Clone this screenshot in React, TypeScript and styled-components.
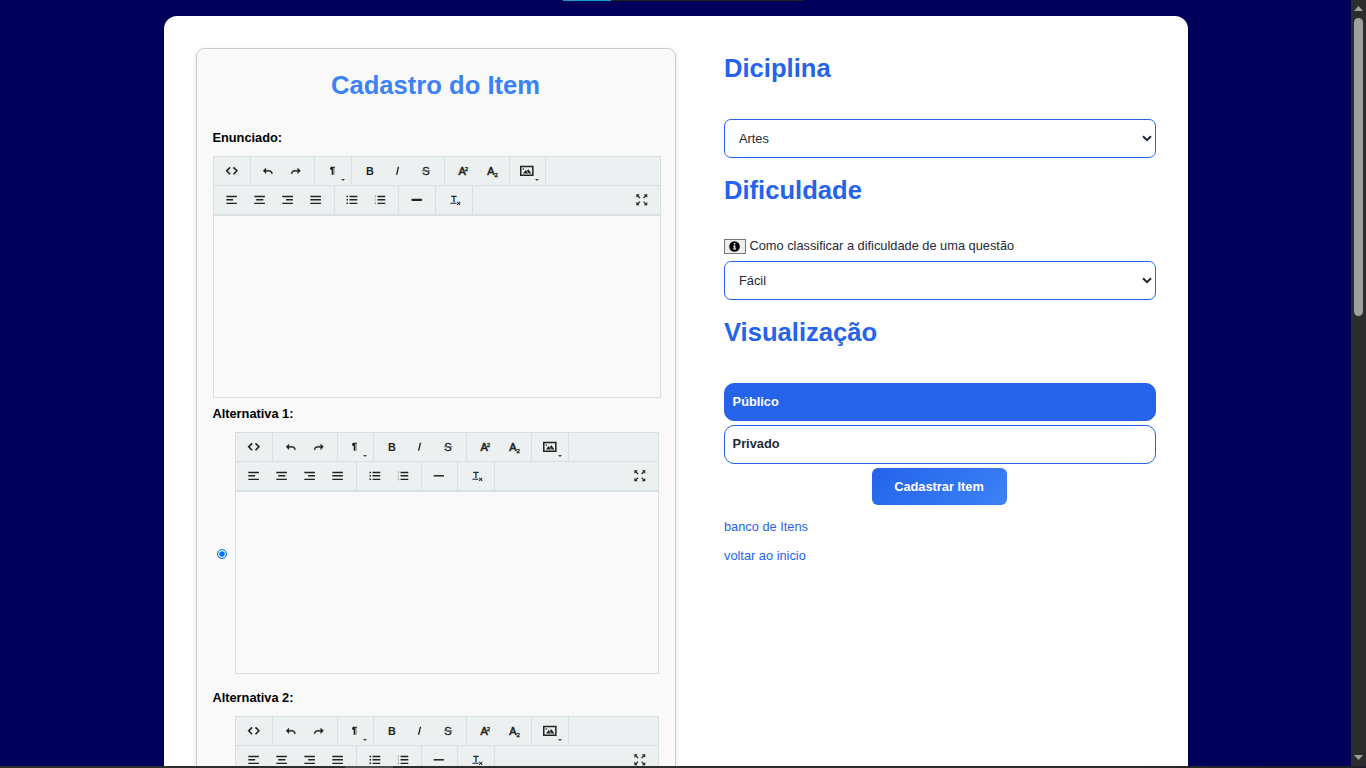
import React from 'react';
import styled, { createGlobalStyle } from 'styled-components';

const GlobalStyle = createGlobalStyle`
  * { box-sizing: border-box; }
  html, body { margin: 0; padding: 0; overflow: hidden; }
  body {
    background: #00005b;
    font-family: "Liberation Sans", Arial, sans-serif;
    font-size: 12.8px;
    color: #1f2937;
  }
`;

const Screen = styled.div`
  display: flex;
  flex-direction: column;
  width: 1366px;
  height: 768px;
  overflow: hidden;
  position: relative;
`;

const Viewport = styled.div`
  display: flex;
  height: 766px;
  overflow: hidden;
`;

const Page = styled.main`
  width: 1351px;
  padding: 16px 163px 0 164px;
  background: #00005b;
`;

const Container = styled.div`
  display: flex;
  gap: 48px;
  height: 900px;
  padding: 32px;
  background: #fff;
  border-radius: 13px;
`;

const ItemPanel = styled.section`
  width: 480px;
  padding: 15px 14px 0 16px;
  background: #f9f9f9;
  border: 1px solid #ccc;
  border-radius: 8px;
  box-shadow: 0 3px 6px rgba(0, 0, 0, 0.1);
`;

const Title = styled.h1`
  margin: 0 3px 32px 0;
  font-size: 25.6px;
  line-height: 42px;
  text-align: center;
  color: #3b82f6;
`;

const FieldLabel = styled.label<{ $top?: number }>`
  display: block;
  height: 18px;
  margin: ${(p) => p.$top ?? 0}px 0 9px -0.6px;
  font-weight: bold;
  line-height: 18px;
  color: #000;
`;

const OptionRow = styled.div`
  display: flex;
  align-items: center;
`;

const Radio = styled.span<{ $checked?: boolean }>`
  width: 10px;
  height: 10px;
  margin: 2px 8px 0 4px;
  border: 1px solid ${(p) => (p.$checked ? '#0075ff' : '#767676')};
  border-radius: 50%;
  background: ${(p) => (p.$checked ? '#0075ff' : '#fff')};
  box-shadow: inset 0 0 0 1.2px #fff;
`;

const EditorBox = styled.div<{ $w: number }>`
  flex: none;
  width: ${(p) => p.$w}px;
  height: 242px;
  border: 1px solid #d7e0e2;
`;

const ToolRow = styled.div<{ $last?: boolean }>`
  display: flex;
  height: ${(p) => (p.$last ? 30 : 29)}px;
  background: #ecf0f1;
  border-bottom: ${(p) => (p.$last ? 2 : 1)}px solid #d7e0e2;
`;

const Group = styled.div<{ $w: number }>`
  display: flex;
  justify-content: center;
  width: ${(p) => p.$w}px;
  padding-right: 0.8px;
  border-right: 1px solid #d7e0e2;
`;

const ToolButton = styled.span<{ $menu?: boolean; $push?: boolean }>`
  position: relative;
  display: flex;
  align-items: center;
  justify-content: center;
  width: 28px;
  height: 28px;
  margin-left: ${(p) => (p.$push ? 'auto' : '0')};
  margin-right: ${(p) => (p.$push ? '4.4px' : '0')};
  svg { display: block; overflow: visible; }
  ${(p) =>
    p.$menu &&
    `&::after {
      content: "";
      position: absolute;
      right: 2px;
      bottom: 4px;
      border: 2px solid transparent;
      border-top-color: #444;
      border-bottom: 0;
    }`}
`;

const letter = { fontFamily: '"Liberation Sans", Arial, sans-serif', fill: '#222' };

const glyphs: Record<string, React.ReactNode> = {
  html: <path fill="none" stroke="#222" strokeWidth="8.5" d="M26.9 17.9L9 36.2 26.9 54M45 54l17.9-18.3L45 17.9" />,
  undo: <path stroke="#222" strokeWidth="1.5" d="M61.2 51.2c0-5.1-2.1-9.7-5.4-13.1-3.3-3.3-8-5.4-13.1-5.4H26.1v-12L10.8 36l15.3 15.3V39.1h16.7c3.3 0 6.4 1.3 8.5 3.5 2.2 2.2 3.5 5.2 3.5 8.5h6.4z" />,
  redo: <path stroke="#222" strokeWidth="1.5" d="M10.8 51.2c0-5.1 2.1-9.7 5.4-13.1 3.3-3.3 8-5.4 13.1-5.4H46v-12L61.3 36 45.9 51.3V39.1H29.3c-3.3 0-6.4 1.3-8.5 3.5-2.2 2.2-3.5 5.2-3.5 8.5h-6.5z" />,
  para: <path d="M47.8 15.1H30.1c-4.7 0-8.5 3.7-8.5 8.4s3.7 8.4 8.4 8.4v25h7V19.8h3v37.1h4.1V19.8h3.7v-4.7z" />,
  bold: <text x="37" y="57" fontSize="57" fontWeight="bold" textAnchor="middle" style={letter}>B</text>,
  italic: <path d="M26 57l10.1-42h7.2L33.2 57H26z" />,
  strike: (
    <>
      <text x="37" y="57" fontSize="59" textAnchor="middle" style={letter} stroke="#222" strokeWidth="2">S</text>
      <path fill="#777" d="M15 33.5h46v5H15z" />
    </>
  ),
  sup: (
    <>
      <text x="33" y="57" fontSize="58" textAnchor="middle" style={letter} stroke="#222" strokeWidth="3">A</text>
      <text x="46" y="35" fontSize="32" style={letter} stroke="#222" strokeWidth="2">2</text>
    </>
  ),
  sub: (
    <>
      <text x="36" y="57" fontSize="58" textAnchor="middle" style={letter} stroke="#222" strokeWidth="3">A</text>
      <text x="56" y="67" fontSize="32" style={letter} stroke="#222" strokeWidth="2">2</text>
    </>
  ),
  image: (
    <>
      <path d="M64 17v38H8V17h56m8-8H0v54h72V9z" />
      <path d="M17.5 22C15 22 13 24 13 26.5s2 4.5 4.5 4.5 4.5-2 4.5-4.5-2-4.5-4.5-4.5zM16 50h27L29.5 32zM36 36.2l8.9-8.5L60.2 50H45.9S35.6 35.9 36 36.2z" />
    </>
  ),
  alignLeft: <path d="M7 15h56v7H7zM7 32h36v8H7zM7 51h56v7H7z" />,
  alignCenter: <path d="M7 15h56v7H7zM17 32h38v8H17zM7 51h56v7H7z" />,
  alignRight: <path d="M7 15h56v7H7zM27 32h36v8H27zM7 51h56v7H7z" />,
  alignFull: <path d="M7 15h56v7H7zM7 32h56v8H7zM7 51h56v7H7z" />,
  bullets: <path d="M24 15h41v7H24zM24 32h41v8H24zM24 51h41v7H24zM8 14h8v8H8zM8 32h8v8H8zM8 50h8v8H8z" />,
  numbers: (
    <>
      <path d="M24 15h41v7H24zM24 32h41v8H24zM24 51h41v7H24z" />
      <path fill="#888" d="M10 12h4v11h-4zM9 31h6v3H9zM9 37h6v3H9zM9 49h6v3H9zM11 52h4v3h-4zM9 56h6v3H9z" />
    </>
  ),
  rule: <path d="M9 32h54v8H9z" />,
  ruleThick: <path d="M11 31h50v11H11zM7 33h58v7H7z" />,
  clear: (
    <>
      <text x="36" y="46" fontSize="46" textAnchor="middle" style={letter} stroke="#222" strokeWidth="2">T</text>
      <path d="M18 51.5H50V57.5H18zM58.2 54.6L52 48.5l3.6-3.6 6.1 6.1 6.4-6.4 3.8 3.8-6.4 6.4 6.1 6.1-3.6 3.6-6.1-6.1-6.4 6.4-3.7-3.8 6.4-6.4z" />
    </>
  ),
  full: <path d="M25.2 7.1H7.1v17.7l6.7-6.5 10.5 10.5 4.5-4.5-10.4-10.5zM47.2 7.1l6.5 6.7-10.5 10.5 4.5 4.5 10.5-10.4 6.7 6.8V7.1zM47.7 43.2l-4.5 4.5 10.4 10.5-6.8 6.7h18.1V47.2l-6.7 6.5zM24.3 43.2L13.8 53.6l-6.7-6.8v18.1h17.7l-6.5-6.7 10.5-10.5z" />,
};

function Tool({ name, push }: { name: string; push?: boolean }) {
  return (
    <ToolButton $menu={name === 'para' || name === 'image'} $push={push}>
      <svg width="13.6" height="13.6" viewBox="0 0 72 72" fill="#222">{glyphs[name]}</svg>
    </ToolButton>
  );
}

const topTools = [['html'], ['undo', 'redo'], ['para'], ['bold', 'italic', 'strike'], ['sup', 'sub'], ['image']];

function Editor({ width, top, bottom, rule }: { width: number; top: number[]; bottom: number[]; rule: string }) {
  const bottomTools = [['alignLeft', 'alignCenter', 'alignRight', 'alignFull'], ['bullets', 'numbers'], [rule], ['clear']];
  const groups = (tools: string[][], widths: number[]) =>
    tools.map((names, i) => (
      <Group key={i} $w={widths[i]}>
        {names.map((n) => <Tool key={n} name={n} />)}
      </Group>
    ));
  return (
    <EditorBox $w={width}>
      <ToolRow>{groups(topTools, top)}</ToolRow>
      <ToolRow $last>
        {groups(bottomTools, bottom)}
        <Tool name="full" push />
      </ToolRow>
    </EditorBox>
  );
}

const OptionEditor = () => (
  <Editor width={424} top={[37, 65, 36, 93, 65, 37]} bottom={[121, 65, 36, 37]} rule="rule" />
);

const Settings = styled.section`
  display: flex;
  flex-direction: column;
  width: 432px;
`;

const Heading = styled.h2<{ $gap: number }>`
  margin: 0 0 ${(p) => p.$gap}px;
  font-size: 25.6px;
  line-height: 40px;
  color: #2563eb;
`;

const SelectBox = styled.div`
  display: flex;
  align-items: center;
  justify-content: space-between;
  height: 39px;
  margin-bottom: 12px;
  padding: 0 3px 0 14px;
  border: 1px solid #2563eb;
  border-radius: 7px;
  background: #fff;
`;

const InfoRow = styled.div`
  display: flex;
  align-items: center;
  gap: 3.5px;
  height: 17px;
  margin-bottom: 7px;
`;

const InfoButton = styled.span`
  display: flex;
  align-items: center;
  justify-content: center;
  width: 22px;
  height: 15px;
  margin-top: 1px;
  padding-right: 1px;
  border: 1px solid #767676;
  background: #efefef;
`;

const Choice = styled.div<{ $active?: boolean }>`
  height: ${(p) => (p.$active ? 38 : 39)}px;
  margin-bottom: 4px;
  padding-left: 7.6px;
  border: 1px solid #2563eb;
  border-radius: 10px;
  font-weight: bold;
  line-height: 35px;
  background: ${(p) => (p.$active ? '#2563eb' : '#fff')};
  color: ${(p) => (p.$active ? '#fff' : '#1f2937')};
`;

const Submit = styled.button`
  align-self: center;
  width: 135px;
  height: 37px;
  margin: 0 0 12px -2px;
  padding: 0;
  border: 0;
  border-radius: 6px;
  font: bold 12.8px "Liberation Sans", Arial, sans-serif;
  color: #fff;
  background: linear-gradient(135deg, #2563eb, #3b82f6);
`;

const PageLink = styled.a`
  height: 19px;
  margin-bottom: 10px;
  line-height: 19px;
  color: #2563eb;
`;

const Select = ({ value }: { value: string }) => (
  <SelectBox>
    {value}
    <svg width="10" height="7" viewBox="0 0 10 7" fill="none" stroke="#1f2937" strokeWidth="2">
      <path d="M1 1.2l4 4 4-4" />
    </svg>
  </SelectBox>
);

const Scrollbar = styled.div`
  display: flex;
  flex-direction: column;
  align-items: center;
  width: 15px;
  height: 766px;
  padding: 6px 0 6px;
  background: #2c2c2c;
`;

const Thumb = styled.div`
  width: 9px;
  height: 298px;
  margin: 7px 0 auto;
  border-radius: 5px;
  background: #9f9f9f;
`;

const BottomEdge = styled.div`
  height: 2px;
  background: linear-gradient(90deg, #2d2d2d 345px, #4f4f4f 345px, #4f4f4f 393px, #2d2d2d 393px, #2d2d2d 1130px, #1f1f27 1280px);
`;

const TopEdge = styled.div`
  position: absolute;
  top: 0;
  left: 563px;
  width: 241px;
  height: 1px;
  background: linear-gradient(90deg, #1c9cc4 48px, #202020 48px);
`;

export default function App() {
  return (
    <Screen>
      <GlobalStyle />
      <Viewport>
        <Page>
          <Container>
            <ItemPanel>
              <Title>Cadastro do Item</Title>
              <FieldLabel $top={-9}>Enunciado:</FieldLabel>
              <Editor width={448} top={[37, 64, 37, 93, 65, 36]} bottom={[121, 64, 37, 37]} rule="ruleThick" />
              <FieldLabel $top={7}>Alternativa 1:</FieldLabel>
              <OptionRow>
                <Radio $checked />
                <OptionEditor />
              </OptionRow>
              <FieldLabel $top={15}>Alternativa 2:</FieldLabel>
              <OptionRow>
                <Radio />
                <OptionEditor />
              </OptionRow>
            </ItemPanel>
            <Settings>
              <Heading $gap={31}>Diciplina</Heading>
              <Select value="Artes" />
              <Heading $gap={27}>Dificuldade</Heading>
              <InfoRow>
                <InfoButton>
                  <svg width="11" height="11" viewBox="0 0 11 11">
                    <circle cx="5.5" cy="5.5" r="5.3" fill="#000" />
                    <path d="M4.7 2h1.7v1.5H4.7zM4.2 4.6h2.2v2.9H7v1H4.1v-1h.7V5.6h-.6z" fill="#efefef" />
                  </svg>
                </InfoButton>
                Como classificar a dificuldade de uma questão
              </InfoRow>
              <Select value="Fácil" />
              <Heading $gap={31}>Visualização</Heading>
              <Choice $active>Público</Choice>
              <Choice>Privado</Choice>
              <Submit>Cadastrar Item</Submit>
              <PageLink>banco de Itens</PageLink>
              <PageLink>voltar ao inicio</PageLink>
            </Settings>
          </Container>
        </Page>
        <Scrollbar>
          <svg width="9" height="5" viewBox="0 0 9 5" fill="#9f9f9f"><path d="M4.5 0L9 5H0z" /></svg>
          <Thumb />
          <svg width="9" height="5" viewBox="0 0 9 5" fill="#9f9f9f"><path d="M4.5 5L9 0H0z" /></svg>
        </Scrollbar>
      </Viewport>
      <BottomEdge />
      <TopEdge />
    </Screen>
  );
}
